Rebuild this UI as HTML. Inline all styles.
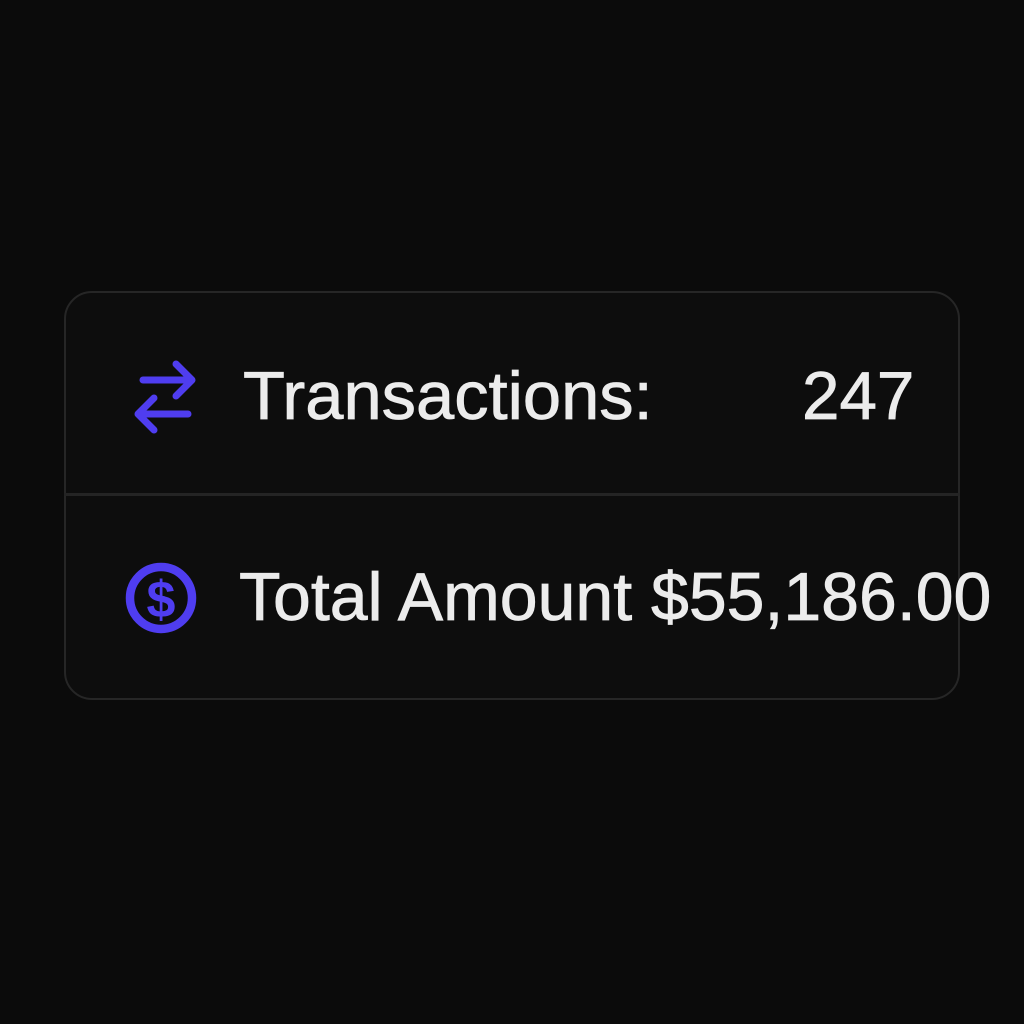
<!DOCTYPE html>
<html><head><style>
html,body{margin:0;padding:0;background:#0b0b0b;width:1024px;height:1024px;overflow:hidden}
.card{position:absolute;left:64px;top:291px;width:892px;height:405px;border:2px solid #262626;border-radius:28px;background:#0d0d0d}
.div{position:absolute;left:64px;top:493px;width:896px;height:3px;background:#242424}
.t{position:absolute;font-family:"Liberation Sans",sans-serif;color:#ececec;font-size:68px;white-space:nowrap;line-height:1;-webkit-text-stroke:0.8px #ececec}
</style></head><body>
<div class="card"></div>
<div class="div"></div>
<svg style="position:absolute;left:0;top:0" width="1024" height="1024">
<g stroke="#4f3df0" stroke-width="7" fill="none" stroke-linecap="round" stroke-linejoin="round">
<path d="M143 380H192M176 364L192 380L176 396"/>
<path d="M188 414H138M154 398L138 414L154 430"/>
<circle cx="161" cy="598" r="31" stroke-width="8.5"/>
</g>
<text x="161" y="617" fill="#4f3df0" font-family="Liberation Sans,sans-serif" font-weight="bold" font-size="52" text-anchor="middle">$</text>
</svg>
<div class="t" style="left:243px;top:362px;transform-origin:left;transform:scaleX(1.01)">Transactions:</div>
<div class="t" style="left:802px;top:362px;transform-origin:left;transform:scaleX(0.99)">247</div>
<div class="t" style="left:239px;top:563px;transform-origin:left;transform:scaleX(1.0)">Total Amount $55,186.00</div>
</body></html>
